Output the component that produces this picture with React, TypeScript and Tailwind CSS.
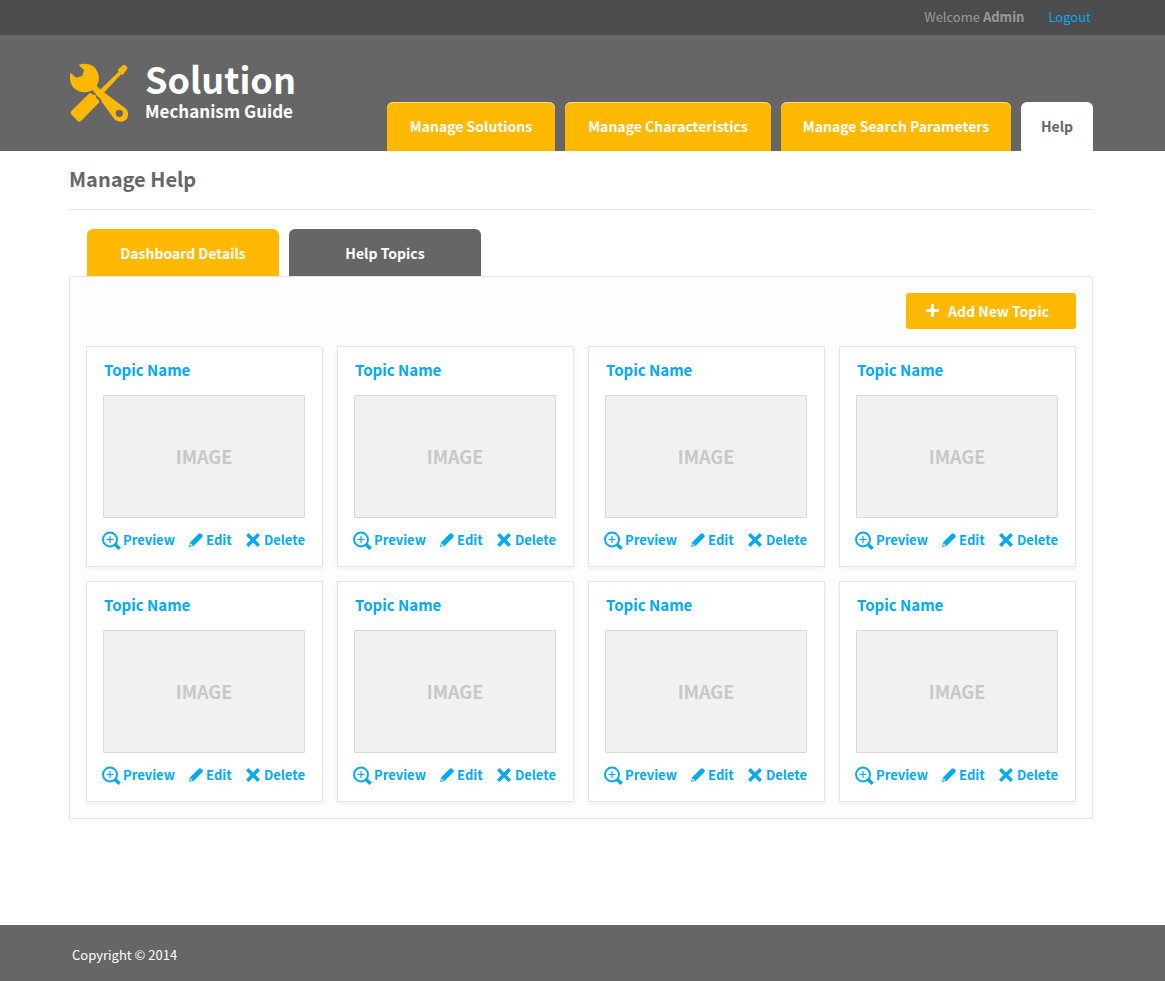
import React from "react";

const navTabs = [
  { label: "Manage Solutions", width: "w-[168px]", active: false },
  { label: "Manage Characteristics", width: "w-[206px]", active: false },
  { label: "Manage Search Parameters", width: "w-[230px]", active: false },
  { label: "Help", width: "w-[72px]", active: true },
];

const topics = Array.from({ length: 8 }, (_, i) => ({ id: i + 1, name: "Topic Name" }));

function ToolsLogo() {
  return (
    <svg className="h-[60px] w-[60px] shrink-0" viewBox="9 9 180 180" fill="#ffb903" aria-hidden="true">
      <path
        d="M38 15C58 7 80 13 91 29C101 44 101 62 92 77L102 88L178 145C188 153 189 169 181 178C171 189 154 187 145 177L97 112L79 91C61 101 38 98 24 84C12 72 9 54 14 38L30 53L49 48L54 30ZM160 149a11 11 0 1 0 0 22a11 11 0 1 0 0-22Z"
        fillRule="evenodd"
      />
      <path d="M90 101L158 35L156 31Q155 28 158 26L172 15Q175 13 178 16L183 21Q186 24 183 28L173 41Q171 45 167 44L165 43L102 111Z" />
      <path d="M17 152L69 101Q73 97 77 101L80 104L86 102L91 107L90 114L98 120Q102 125 98 129L45 183Q40 188 35 183L17 164Q11 158 17 152Z" />
      <path d="M78 93L89 105M98 113L106 124" fill="none" stroke="#666666" strokeWidth="4" />
    </svg>
  );
}

function PreviewIcon() {
  return (
    <svg className="mt-0.5 h-5 w-5" viewBox="0 0 20 20" fill="none" stroke="currentColor" aria-hidden="true">
      <circle cx="9" cy="8.500" r="7" strokeWidth="1.900" />
      <path d="M9 5v7M5.500 8.500h7" strokeWidth="1.200" />
      <path d="M13.700 13.200l5 4.500" strokeWidth="3.400" />
    </svg>
  );
}

function EditIcon() {
  return (
    <svg className="h-[14px] w-[14px]" viewBox="0 0 14 14" fill="currentColor" aria-hidden="true">
      <path d="M9.700.7q1.200-1.100 2.400 0l1.200 1.200q1.100 1.200 0 2.400L4.800 12.700 0 14l1.200-4.800zM1.900 10.300l-.8 2.600 2.600-.8z" fillRule="evenodd" />
    </svg>
  );
}

function DeleteIcon() {
  return (
    <svg className="h-[14px] w-[14px]" viewBox="0 0 14 14" fill="none" stroke="currentColor" strokeWidth="3.400" aria-hidden="true">
      <path d="M1.300 1.300l11.400 11.400M12.700 1.300L1.300 12.700" />
    </svg>
  );
}

function TopicCard({ name }: { name: string }) {
  return (
    <article className="border border-[#e6e6e6] bg-white pt-3 pr-[17px] pb-4 pl-4 shadow-[0_2px_4px_rgba(0,0,0,0.05)]">
      <h2 className="px-px text-[15px] leading-[22px] font-bold text-[#03a9f4]">{name}</h2>
      <div className="mt-[14px] flex h-[123px] items-center justify-center rounded-[1px] border border-[#d9d9d9] bg-[#f1f1f1] pb-0.5 text-lg leading-6 font-bold text-[#c8c8c8]">
        IMAGE
      </div>
      <div className="mt-3 -ml-0.5 flex h-5 items-center justify-between text-[13px] leading-5 font-bold whitespace-nowrap text-[#03a9f4]">
        <button type="button" className="flex items-center gap-0.5">
          <PreviewIcon />
          Preview
        </button>
        <button type="button" className="flex items-center gap-[3px]">
          <EditIcon />
          Edit
        </button>
        <button type="button" className="flex items-center gap-1">
          <DeleteIcon />
          Delete
        </button>
      </div>
    </article>
  );
}

export default function App() {
  return (
    <div className="flex min-h-screen flex-col bg-white font-['Noto_Sans_CJK_SC',sans-serif] text-[#666666]">
      <div className="flex h-[35px] items-center justify-end gap-6 bg-[#4c4c4c] pr-[74px] pb-0.5 pl-[69px] text-[13px] text-[#999999]">
        <p>
          Welcome <strong className="font-bold">Admin</strong>
        </p>
        <a href="#logout" className="text-[#03a9f4]">Logout</a>
      </div>

      <header className="flex h-[116px] items-end justify-between bg-[#666666] pr-[72px] pl-[69px]">
        <a href="#home" className="mb-[25px] flex items-center gap-4 text-white">
          <ToolsLogo />
          <span className="flex flex-col font-bold">
            <span className="text-4xl leading-9">Solution</span>
            <span className="text-[17px] leading-[30px]">Mechanism Guide</span>
          </span>
        </a>
        <nav className="flex gap-2.5 text-[14px] font-bold whitespace-nowrap">
          {navTabs.map((tab) => (
            <a
              key={tab.label}
              href="#section"
              className={`flex h-[49px] items-center justify-center rounded-t-md ${tab.width} ${
                tab.active ? "bg-white text-[#666666]" : "bg-[#ffb903] text-white shadow-[inset_0_1px_0_#ffdc81]"
              }`}
            >
              {tab.label}
            </a>
          ))}
        </nav>
      </header>

      <main className="flex-1 pr-[72px] pb-12 pl-[69px]">
        <h1 className="border-b border-[#e6e6e6] pt-3 pb-3.5 text-xl leading-8 font-bold">Manage Help</h1>

        <div className="mt-[19px] flex gap-2.5 px-[18px] text-[14px] font-bold text-white">
          <button type="button" className="h-[47px] w-48 rounded-t-md bg-[#ffb903] pt-0.5">Dashboard Details</button>
          <button type="button" className="h-[47px] w-48 rounded-t-md bg-[#666666] pt-0.5">Help Topics</button>
        </div>

        <section className="border border-[#e6e6e6] bg-[#fdfdfd] p-4">
          <div className="flex justify-end">
            <button type="button" className="flex h-9 w-[170px] items-center gap-2 rounded-[3px] bg-[#ffb903] pl-5 text-[14px] font-bold text-white">
              <svg className="h-[14px] w-[14px]" viewBox="0 0 14 14" fill="currentColor" aria-hidden="true">
                <path d="M5 0h3v5h5v3H8v5H5V8H0V5h5z" />
              </svg>
              Add New Topic
            </button>
          </div>
          <div className="mt-[17px] grid grid-cols-4 gap-[14px]">
            {topics.map((topic) => (
              <TopicCard key={topic.id} name={topic.name} />
            ))}
          </div>
        </section>
      </main>

      <footer className="flex h-14 items-center bg-[#666666] pt-1 pr-[72px] pl-[72px] text-[13px] text-white">
        Copyright © 2014
      </footer>
    </div>
  );
}
